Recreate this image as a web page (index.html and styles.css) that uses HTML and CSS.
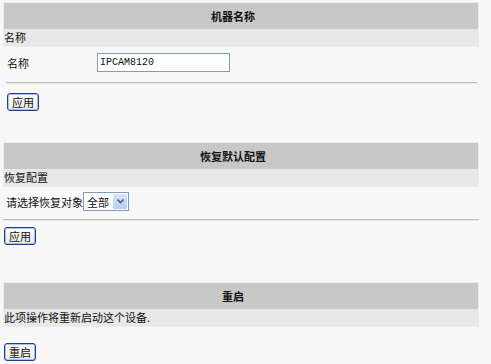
FILE: index.html
```html
<!DOCTYPE html>
<html lang="zh-CN">
<head>
    <meta charset="UTF-8">
    <title>系统设置</title>
    <link rel="stylesheet" href="styles.css">
</head>
<body>
    <div class="page">
        <!-- 机器名称 -->
        <section class="sect sect-name">
            <div class="box">
                <div class="head">机器名称</div>
                <div class="sub">名称</div>
            </div>
            <div class="body">
                <div class="row">
                    <label class="lbl" for="devName">名称</label>
                    <input id="devName" class="txt" type="text" value="IPCAM8120">
                </div>
                <hr class="line">
                <button class="btn">应用</button>
            </div>
        </section>

        <!-- 恢复默认配置 -->
        <section class="sect sect-reset">
            <div class="box">
                <div class="head">恢复默认配置</div>
                <div class="sub">恢复配置</div>
            </div>
            <div class="row row-sel">
                <label class="lbl-inline" for="target">请选择恢复对象</label>
                <span class="sel">
                    <select id="target"><option>全部</option></select>
                    <span class="sel-arrow">
                        <svg width="7" height="5" viewBox="0 0 7 5"><path d="M0.5 0.5 L3.5 3.5 L6.5 0.5" fill="none" stroke="#4d6185" stroke-width="1.6"/></svg>
                    </span>
                </span>
            </div>
            <hr class="line line-wide">
            <button class="btn btn-left">应用</button>
        </section>

        <!-- 重启 -->
        <section class="sect sect-reboot">
            <div class="box">
                <div class="head">重启</div>
                <div class="sub">此项操作将重新启动这个设备.</div>
            </div>
            <button class="btn btn-left btn-reboot">重启</button>
        </section>
    </div>
</body>
</html>
```

FILE: styles.css
```css
html, body { margin: 0; padding: 0; }
body { background: #f8f8f8; color: #111; font-family: "Noto Sans CJK SC", "Liberation Sans", sans-serif; font-size: 11px; width: 491px; height: 364px; overflow: hidden; }

.page { width: 476px; margin-left: 3px; padding-top: 2px; }

.box { border: 1px solid #ececec; }
.head { background: #c8c8c8; height: 26px; line-height: 26px; text-align: center; font-weight: bold; padding-right: 16px; }
.sub { background: #e8e8e8; height: 17px; line-height: 17px; padding-left: 0; }

.sect-reset { margin-top: 31px; }
.sect-reboot { margin-top: 37px; }

.body { padding: 0 2px 0 3px; }
.row { display: flex; align-items: center; }
.sect-name .row { margin-top: 6px; height: 19px; }
.lbl { width: 90px; padding-left: 1px; }
.txt { width: 129px; height: 17px; box-sizing: content-box; padding: 0 0 0 2px; margin: 0; border: 1px solid #7f9db9; background: #fff; font-family: "Liberation Mono", monospace; font-size: 10px; color: #111; outline: none; }

.line { border: 0; border-top: 1px solid #c4bfb2; border-bottom: 1px solid #ebe9e2; height: 0; margin: 9px 0 0; }
.sect-name .line { margin-top: 10px; }
.line-wide { margin-top: 8px; }

.btn { display: block; width: 32px; height: 18px; padding: 0; margin: 9px 0 0 1px; border: 1px solid #1f3f8c; border-radius: 3px; background: linear-gradient(#fdfdfb, #ecebe4); box-shadow: inset 0 0 0 1px #a9c0ec; font-family: inherit; font-size: 11px; color: #111; line-height: 15px; }
.btn-left { margin: 6px 0 0 1px; }
.btn-reboot { margin-top: 16px; }

.row-sel { margin-top: 5px; height: 19px; padding-left: 3px; }
.lbl-inline { margin-right: 0; }
.sel { position: relative; display: inline-block; width: 46px; height: 19px; }
.sel select { appearance: none; -webkit-appearance: none; width: 46px; height: 19px; margin: 0; padding: 0 0 0 3px; border: 1px solid #7f9db9; border-radius: 0; background: #fff; font-family: inherit; font-size: 11px; color: #111; outline: none; }
.sel-arrow { position: absolute; top: 2px; right: 2px; width: 14px; height: 15px; background: linear-gradient(#dbe6fd, #b7cbf5); border-radius: 1px; display: flex; align-items: center; justify-content: center; }
```
